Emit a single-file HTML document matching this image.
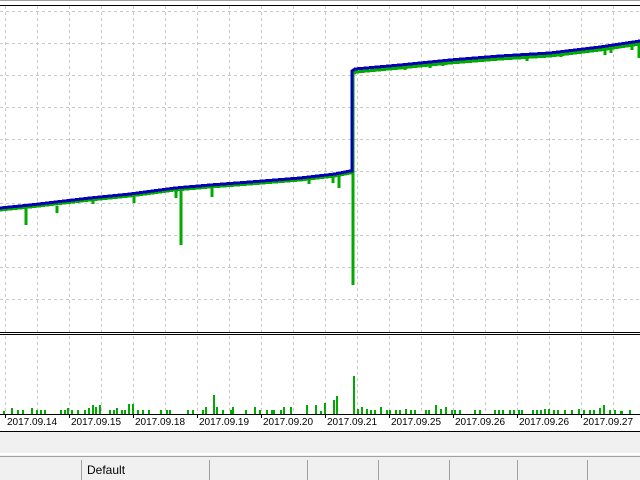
<!DOCTYPE html>
<html><head><meta charset="utf-8"><style>
html,body{margin:0;padding:0;background:#fff;width:640px;height:480px;overflow:hidden;font-family:"Liberation Sans",sans-serif}
</style></head><body>
<svg width="640" height="480" xmlns="http://www.w3.org/2000/svg" style="position:absolute;left:0;top:0">
<rect x="0" y="0" width="640" height="480" fill="#fff"/>
<rect x="0" y="0" width="640" height="1" fill="#a0a0a0"/>
<rect x="0" y="5" width="640" height="1" fill="#000"/>
<g stroke="#c8c8c8" stroke-width="1" stroke-dasharray="3,3" shape-rendering="crispEdges">
<path d="M0 11.5H640M0 43.5H640M0 75.5H640M0 107.5H640M0 139.5H640M0 171.5H640M0 203.5H640M0 235.5H640M0 267.5H640M0 299.5H640"/>
<path d="M5.5 6V332M37.5 6V332M69.5 6V332M101.5 6V332M133.5 6V332M165.5 6V332M197.5 6V332M229.5 6V332M261.5 6V332M293.5 6V332M325.5 6V332M357.5 6V332M389.5 6V332M421.5 6V332M453.5 6V332M485.5 6V332M517.5 6V332M549.5 6V332M581.5 6V332M613.5 6V332"/>
<path d="M5.5 336V414M37.5 336V414M69.5 336V414M101.5 336V414M133.5 336V414M165.5 336V414M197.5 336V414M229.5 336V414M261.5 336V414M293.5 336V414M325.5 336V414M357.5 336V414M389.5 336V414M421.5 336V414M453.5 336V414M485.5 336V414M517.5 336V414M549.5 336V414M581.5 336V414M613.5 336V414"/>
</g>
<rect x="0" y="332" width="640" height="1" fill="#000"/>
<rect x="0" y="334" width="640" height="1" fill="#000"/>
<g stroke="#00aa00" fill="none" stroke-width="3" shape-rendering="crispEdges">
<polyline points="0,210 30,207 90,200 130,196 175,190 210,187 250,184 300,180 335,176 350,173 353,173 353,74 356,72 400,68 450,63 500,59 550,56 600,50 640,44"/>
<path d="M26 208V225M57 206V213M93 200V204M134 196V203M176 190V198M181 190V245M212 186V197M309 180V184M333 176V183M339 176V188M353 120V285M405 66V70M430 64V68M443 62V66M527 56V61M561 54V57M605 49V55M611 48V53M632 45V50M639 44V58"/>
</g>
<polyline points="0,208 30,205 90,198 130,194 175,188 210,185 250,182 300,178 335,174 350,171 352,171 352,71 355,69 400,65 450,60 500,56 550,53 600,47 640,41" stroke="#0000b4" stroke-width="3" fill="none" shape-rendering="crispEdges"/>
<g fill="#00aa00">
<rect x="3" y="411" width="2" height="3"/><rect x="11" y="408" width="2" height="6"/><rect x="17" y="410" width="2" height="4"/><rect x="22" y="410" width="2" height="4"/><rect x="31" y="408" width="2" height="6"/><rect x="36" y="410" width="2" height="4"/><rect x="40" y="410" width="2" height="4"/><rect x="44" y="410" width="2" height="4"/><rect x="60" y="410" width="2" height="4"/><rect x="64" y="410" width="2" height="4"/><rect x="67" y="408" width="2" height="6"/><rect x="71" y="410" width="2" height="4"/><rect x="77" y="410" width="2" height="4"/><rect x="84" y="410" width="2" height="4"/><rect x="88" y="408" width="2" height="6"/><rect x="92" y="405" width="2" height="9"/><rect x="95" y="407" width="2" height="7"/><rect x="99" y="405" width="2" height="9"/><rect x="109" y="410" width="2" height="4"/><rect x="113" y="410" width="2" height="4"/><rect x="116" y="408" width="2" height="6"/><rect x="121" y="410" width="2" height="4"/><rect x="124" y="410" width="2" height="4"/><rect x="128" y="404" width="2" height="10"/><rect x="132" y="404" width="2" height="10"/><rect x="137" y="410" width="2" height="4"/><rect x="142" y="410" width="2" height="4"/><rect x="148" y="410" width="2" height="4"/><rect x="160" y="410" width="2" height="4"/><rect x="166" y="410" width="2" height="4"/><rect x="169" y="410" width="2" height="4"/><rect x="187" y="410" width="2" height="4"/><rect x="192" y="410" width="2" height="4"/><rect x="202" y="410" width="2" height="4"/><rect x="205" y="407" width="2" height="7"/><rect x="213" y="395" width="2" height="19"/><rect x="216" y="407" width="2" height="7"/><rect x="222" y="410" width="2" height="4"/><rect x="230" y="410" width="2" height="4"/><rect x="232" y="407" width="2" height="7"/><rect x="245" y="410" width="2" height="4"/><rect x="254" y="407" width="2" height="7"/><rect x="259" y="410" width="2" height="4"/><rect x="266" y="410" width="2" height="4"/><rect x="271" y="410" width="2" height="4"/><rect x="273" y="410" width="2" height="4"/><rect x="280" y="410" width="2" height="4"/><rect x="283" y="407" width="2" height="7"/><rect x="290" y="407" width="2" height="7"/><rect x="306" y="405" width="2" height="9"/><rect x="315" y="405" width="2" height="9"/>
<rect x="320" y="411" width="2" height="3"/><rect x="324" y="403" width="2" height="11"/><rect x="333" y="400" width="2" height="14"/><rect x="336" y="396" width="2" height="18"/><rect x="353" y="376" width="2" height="38"/><rect x="357" y="409" width="2" height="5"/><rect x="361" y="407" width="2" height="7"/><rect x="366" y="409" width="2" height="5"/><rect x="370" y="410" width="2" height="4"/><rect x="374" y="410" width="2" height="4"/><rect x="380" y="407" width="2" height="7"/><rect x="386" y="410" width="2" height="4"/><rect x="389" y="410" width="2" height="4"/><rect x="395" y="410" width="2" height="4"/><rect x="399" y="410" width="2" height="4"/><rect x="405" y="409" width="2" height="5"/><rect x="410" y="410" width="2" height="4"/><rect x="414" y="410" width="2" height="4"/><rect x="425" y="410" width="2" height="4"/><rect x="428" y="410" width="2" height="4"/><rect x="435" y="405" width="2" height="9"/><rect x="440" y="409" width="2" height="5"/><rect x="445" y="407" width="2" height="7"/><rect x="451" y="410" width="2" height="4"/><rect x="454" y="410" width="2" height="4"/><rect x="459" y="410" width="2" height="4"/><rect x="474" y="410" width="2" height="4"/><rect x="479" y="410" width="2" height="4"/><rect x="494" y="410" width="2" height="4"/><rect x="498" y="410" width="2" height="4"/><rect x="502" y="410" width="2" height="4"/><rect x="509" y="410" width="2" height="4"/><rect x="513" y="410" width="2" height="4"/><rect x="518" y="410" width="2" height="4"/><rect x="521" y="410" width="2" height="4"/><rect x="532" y="410" width="2" height="4"/><rect x="536" y="410" width="2" height="4"/><rect x="540" y="410" width="2" height="4"/><rect x="544" y="409" width="2" height="5"/><rect x="548" y="409" width="2" height="5"/><rect x="553" y="410" width="2" height="4"/><rect x="557" y="410" width="2" height="4"/><rect x="564" y="410" width="2" height="4"/><rect x="571" y="410" width="2" height="4"/><rect x="578" y="409" width="2" height="5"/><rect x="583" y="410" width="2" height="4"/><rect x="589" y="410" width="2" height="4"/><rect x="593" y="410" width="2" height="4"/><rect x="599" y="408" width="2" height="6"/><rect x="603" y="405" width="2" height="9"/><rect x="609" y="410" width="2" height="4"/><rect x="614" y="410" width="2" height="4"/><rect x="620" y="411" width="3" height="3"/><rect x="629" y="410" width="2" height="4"/>
</g>
<rect x="0" y="414" width="640" height="1" fill="#000"/>
<path d="M5.5 414V418M69.5 414V418M133.5 414V418M197.5 414V418M261.5 414V418M325.5 414V418M389.5 414V418M453.5 414V418M517.5 414V418M581.5 414V418" stroke="#000"/>
<g font-family="Liberation Sans, sans-serif" font-size="10" fill="#000">
<text x="7" y="425">2017.09.14</text><text x="71" y="425">2017.09.15</text><text x="135" y="425">2017.09.18</text><text x="199" y="425">2017.09.19</text><text x="263" y="425">2017.09.20</text><text x="327" y="425">2017.09.21</text><text x="391" y="425">2017.09.25</text><text x="455" y="425">2017.09.26</text><text x="519" y="425">2017.09.26</text><text x="583" y="425">2017.09.27</text>
</g>
<rect x="0" y="431" width="640" height="1" fill="#000"/>
<rect x="0" y="432" width="640" height="48" fill="#f0f0f0"/>
<rect x="0" y="453" width="640" height="2" fill="#fff"/>
<rect x="0" y="456" width="640" height="1" fill="#a0a0a0"/>
<g fill="#a0a0a0">
<rect x="81" y="460" width="1" height="20"/><rect x="209" y="460" width="1" height="20"/><rect x="307" y="460" width="1" height="20"/><rect x="378" y="460" width="1" height="20"/><rect x="449" y="460" width="1" height="20"/><rect x="517" y="460" width="1" height="20"/><rect x="587" y="460" width="1" height="20"/>
</g>
<text x="87" y="474" font-family="Liberation Sans, sans-serif" font-size="12" fill="#000">Default</text>
</svg>
</body></html>
